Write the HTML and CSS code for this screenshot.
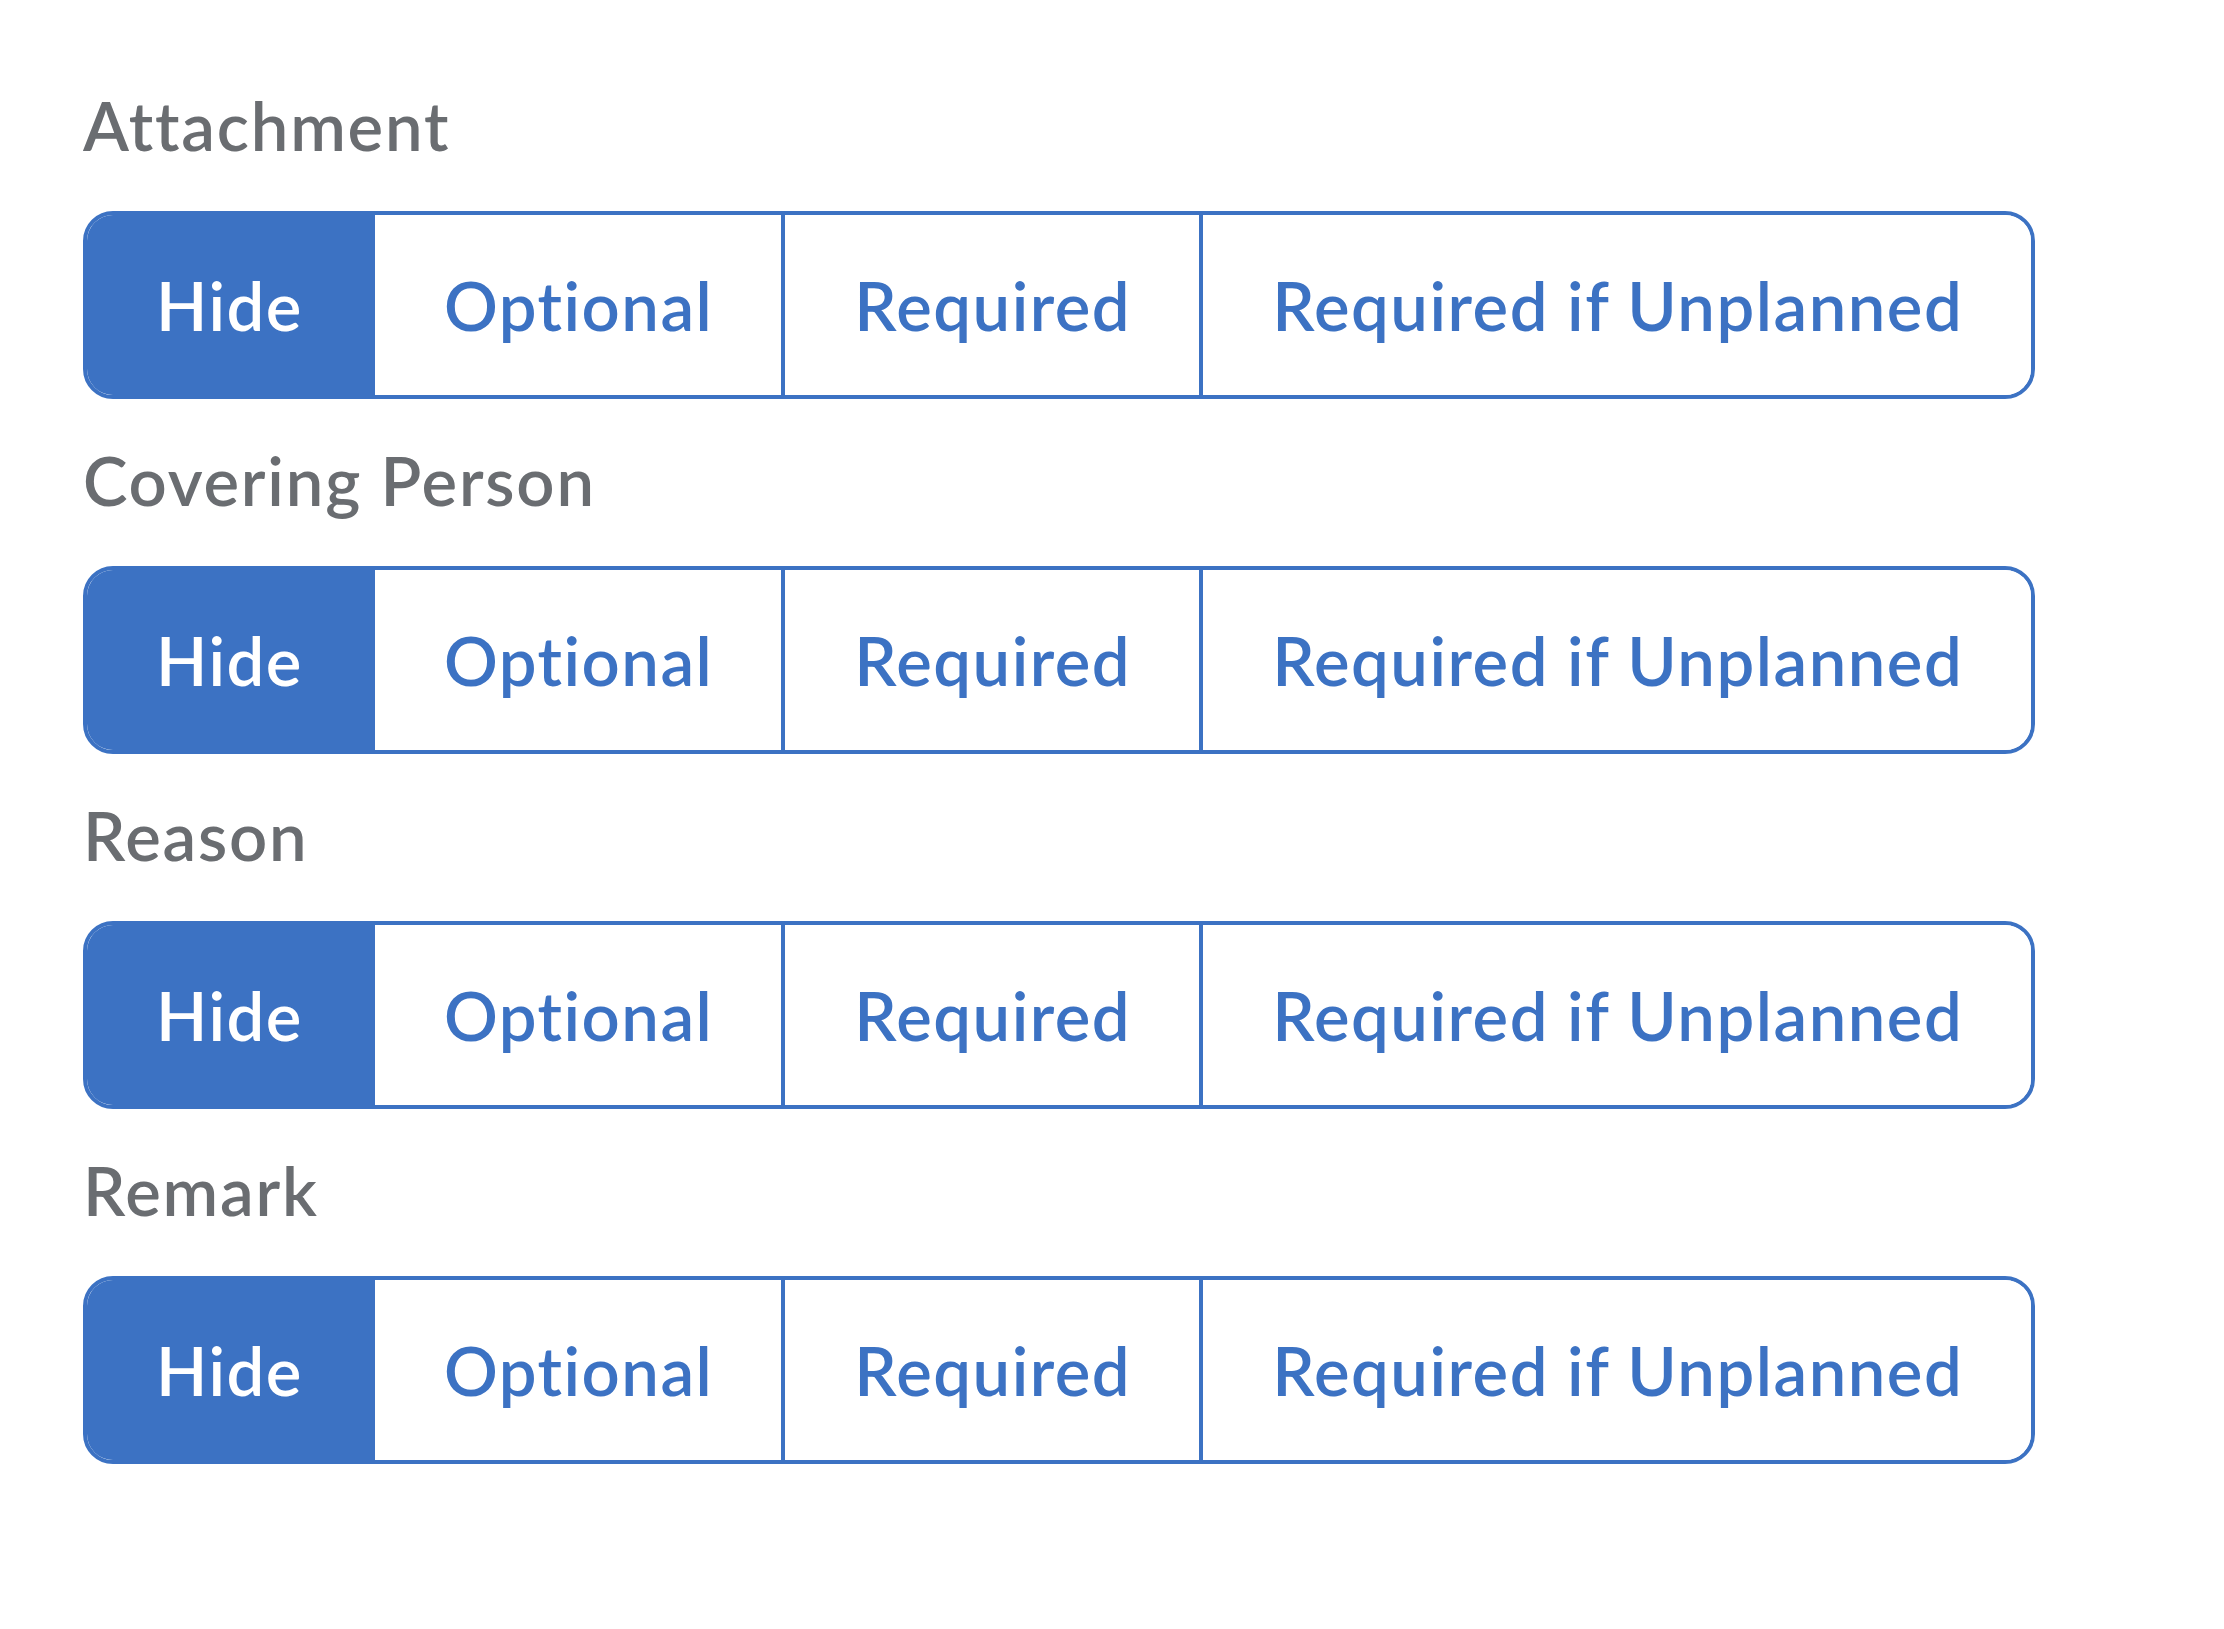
FILE: index.html
```html
<!DOCTYPE html>
<html lang="en">
<head>
<meta charset="utf-8">
<title>Field settings</title>
<link rel="stylesheet" href="styles.css">
</head>
<body>
<main class="panel">
  <section class="field">
    <div class="field-label">Attachment</div>
    <div class="segmented">
      <button class="seg active">Hide</button>
      <button class="seg">Optional</button>
      <button class="seg">Required</button>
      <button class="seg">Required if Unplanned</button>
    </div>
  </section>
  <section class="field">
    <div class="field-label">Covering Person</div>
    <div class="segmented">
      <button class="seg active">Hide</button>
      <button class="seg">Optional</button>
      <button class="seg">Required</button>
      <button class="seg">Required if Unplanned</button>
    </div>
  </section>
  <section class="field">
    <div class="field-label">Reason</div>
    <div class="segmented">
      <button class="seg active">Hide</button>
      <button class="seg">Optional</button>
      <button class="seg">Required</button>
      <button class="seg">Required if Unplanned</button>
    </div>
  </section>
  <section class="field">
    <div class="field-label">Remark</div>
    <div class="segmented">
      <button class="seg active">Hide</button>
      <button class="seg">Optional</button>
      <button class="seg">Required</button>
      <button class="seg">Required if Unplanned</button>
    </div>
  </section>
</main>
</body>
</html>
```

FILE: styles.css
```css
html, body {
  margin: 0;
  padding: 0;
  background: #ffffff;
}

.panel {
  padding: 85px 0 0 83px;
  font-family: Lato, "Open Sans", sans-serif;
}

.field {
  display: flex;
  flex-direction: column;
  align-items: flex-start;
  margin-bottom: 41px;
}

.field-label {
  font-size: 67px;
  font-weight: 600;
  line-height: 80px;
  letter-spacing: 1.8px;
  color: #6a6d71;
  margin-bottom: 46px;
}

.segmented {
  display: inline-flex;
  border: 4px solid #3c72c3;
  border-radius: 30px;
  overflow: hidden;
  background: #ffffff;
}

.seg {
  appearance: none;
  margin: 0;
  border: 0;
  border-left: 4px solid #3c72c3;
  background: #ffffff;
  color: #3c72c3;
  font-family: inherit;
  font-size: 67px;
  font-weight: 600;
  letter-spacing: 1.5px;
  line-height: 180px;
  height: 180px;
  padding: 0 68px 0 69px;
  white-space: nowrap;
  cursor: pointer;
}

.seg:first-child {
  border-left: 0;
}

.seg.active {
  background: #3c72c3;
  color: #ffffff;
}
```
